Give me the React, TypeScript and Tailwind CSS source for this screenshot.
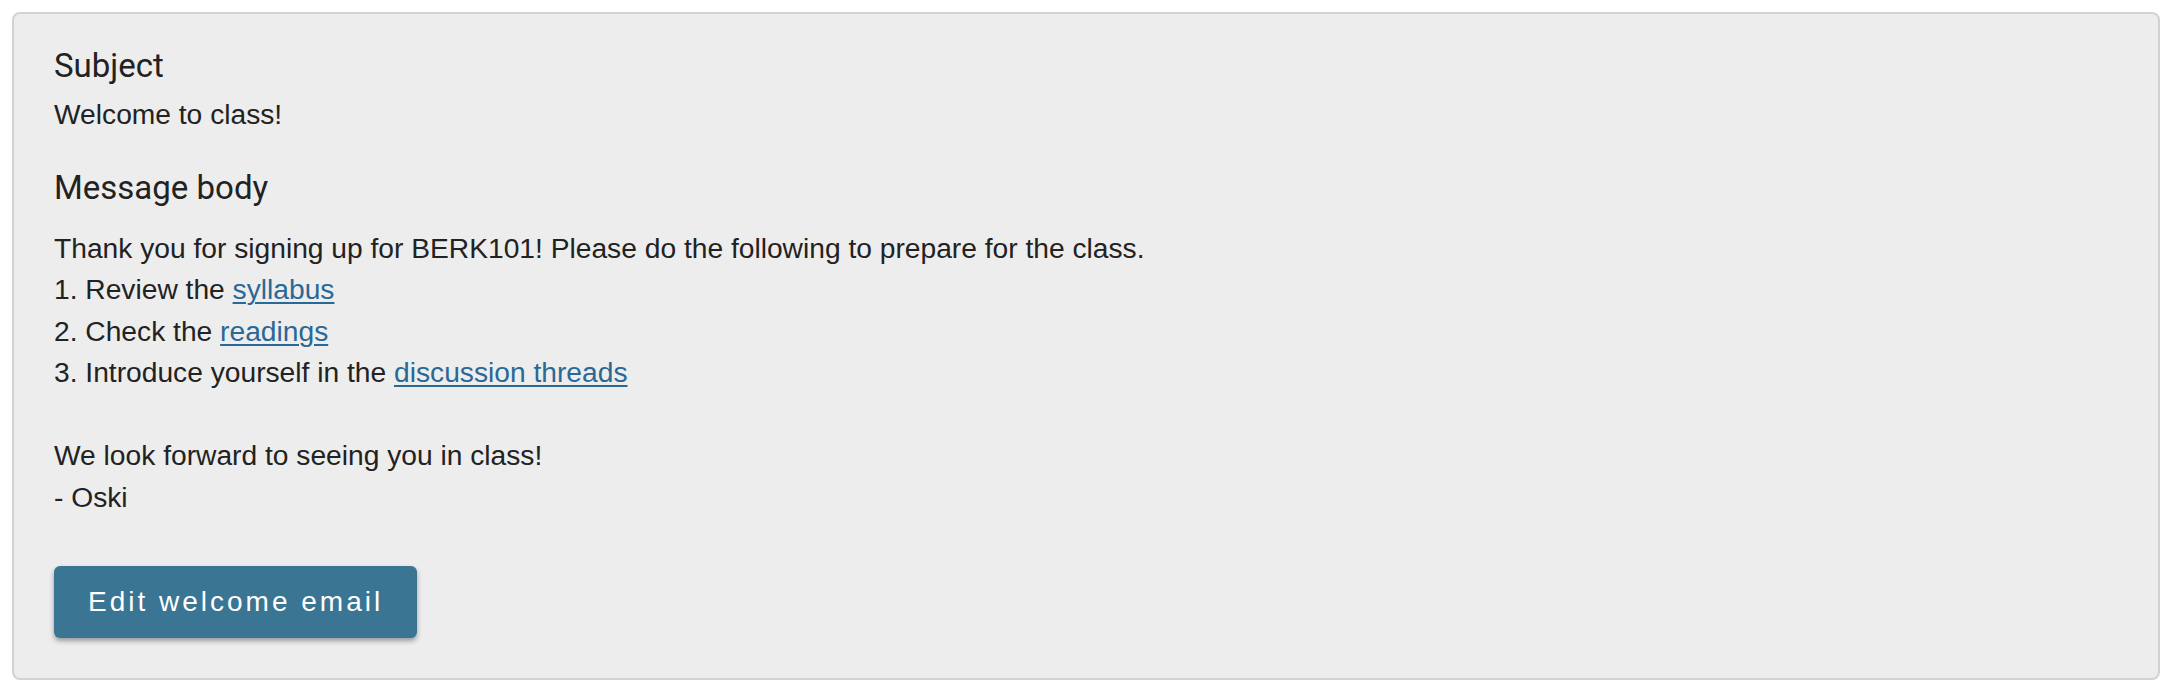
export default function App() {
  const body = "font-['Liberation_Sans',Arial,sans-serif] text-[28.2px] leading-[41.5px] text-[#222222]";
  const heading = "font-['Roboto',Arial,sans-serif] text-[33px] leading-[40px] text-[#222222]";
  const link = "text-[#2a6896] underline underline-offset-[3px] decoration-[2px]";

  return (
    <div className="min-h-screen bg-white p-3">
      <div className="rounded-lg border-2 border-[#d2d2d2] bg-[#ededed] px-10 pt-8 pb-10">
        <h2 className={heading}>Subject</h2>
        <p className={`${body} mt-[8px]`}>Welcome to class!</p>

        <h2 className={`${heading} mt-[32px]`}>Message body</h2>
        <div className={`${body} mt-[20px]`}>
          <p>Thank you for signing up for BERK101! Please do the following to prepare for the class.</p>
          <p>
            1. Review the <a href="#" className={link}>syllabus</a>
          </p>
          <p>
            2. Check the <a href="#" className={link}>readings</a>
          </p>
          <p>
            3. Introduce yourself in the <a href="#" className={link}>discussion threads</a>
          </p>
          <p>&nbsp;</p>
          <p>We look forward to seeing you in class!</p>
          <p>- Oski</p>
        </div>

        <button
          type="button"
          className="mt-[48px] h-[72px] rounded-md bg-[#3a7594] px-[34px] font-['Liberation_Sans',Arial,sans-serif] text-[28px] tracking-[3px] text-white shadow-[0_3px_5px_rgba(0,0,0,0.35)]"
        >
          Edit welcome email
        </button>
      </div>
    </div>
  );
}
